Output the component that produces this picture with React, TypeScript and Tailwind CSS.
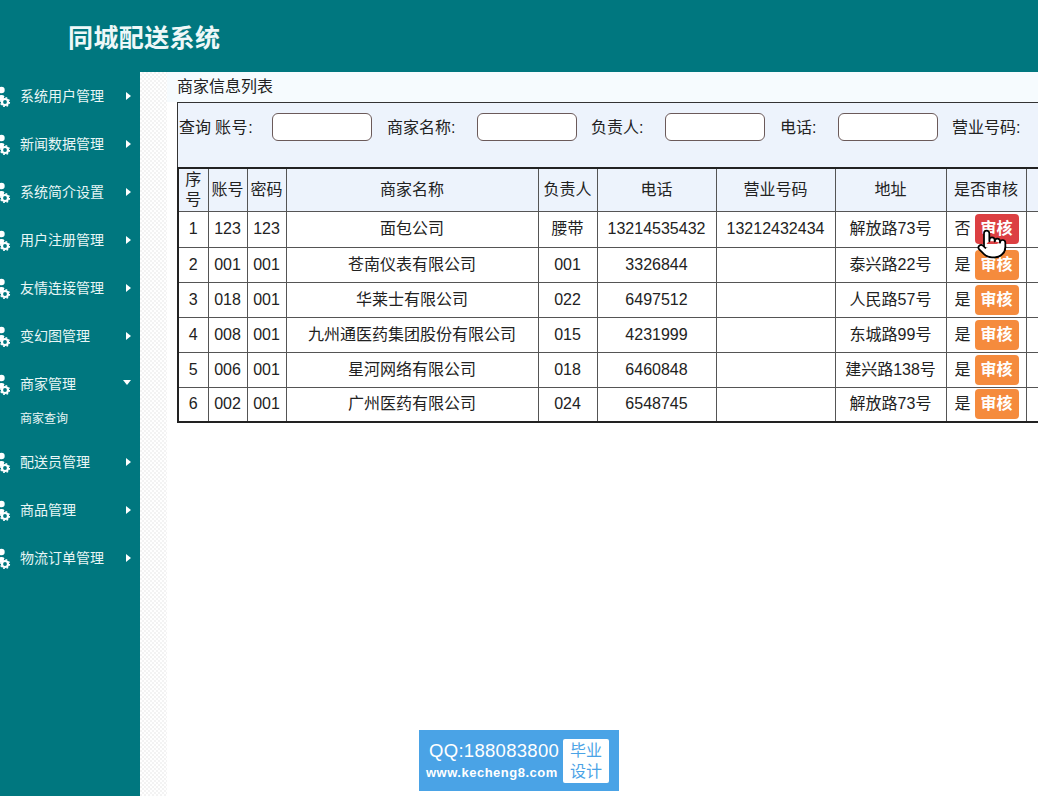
import { Pointer } from "lucide-react";

const menus = [
  "系统用户管理",
  "新闻数据管理",
  "系统简介设置",
  "用户注册管理",
  "友情连接管理",
  "变幻图管理",
  "商家管理",
  "配送员管理",
  "商品管理",
  "物流订单管理",
];

const rows = [
  { id: 1, account: "123", pwd: "123", name: "面包公司", owner: "腰带", tel: "13214535432", license: "13212432434", addr: "解放路73号", audit: "否" },
  { id: 2, account: "001", pwd: "001", name: "苍南仪表有限公司", owner: "001", tel: "3326844", license: "", addr: "泰兴路22号", audit: "是" },
  { id: 3, account: "018", pwd: "001", name: "华莱士有限公司", owner: "022", tel: "6497512", license: "", addr: "人民路57号", audit: "是" },
  { id: 4, account: "008", pwd: "001", name: "九州通医药集团股份有限公司", owner: "015", tel: "4231999", license: "", addr: "东城路99号", audit: "是" },
  { id: 5, account: "006", pwd: "001", name: "星河网络有限公司", owner: "018", tel: "6460848", license: "", addr: "建兴路138号", audit: "是" },
  { id: 6, account: "002", pwd: "001", name: "广州医药有限公司", owner: "024", tel: "6548745", license: "", addr: "解放路73号", audit: "是" },
];

const headers = ["序号", "账号", "密码", "商家名称", "负责人", "电话", "营业号码", "地址", "是否审核", ""];

function MenuIcon() {
  return (
    <svg width="12" height="24" viewBox="0 0 12 24" className="shrink-0">
      <circle cx="1.5" cy="5" r="3.2" fill="#fff" />
      <path d="M-3 15c0-3 2-5 4.5-5 1.300 0 2.300.4 3 1.200L2.500 15z" fill="#fff" />
      <circle cx="5" cy="17" r="3" fill="none" stroke="#fff" strokeWidth="2.200" />
      <circle cx="5" cy="17" r="4.400" fill="none" stroke="#fff" strokeWidth="1.400" strokeDasharray="1.700 1.750" />
    </svg>
  );
}

function SearchInput() {
  return <input className="h-[28px] w-[100px] shrink-0 rounded-[6px] border border-[#6b5a5a] bg-white" />;
}

export default function App() {
  return (
    <div className="relative h-[796px] w-[1038px] overflow-hidden bg-white font-['Liberation_Sans','Noto_Sans_CJK_SC',sans-serif] text-[16px] text-[#222]">
      <div className="flex h-[72px] items-center bg-[#00777f] pt-[5px] pl-[68px]">
        <h1 className="text-[25px] font-bold tracking-[0.4px] text-[#eef8f8]">同城配送系统</h1>
      </div>

      <div className="flex h-[724px]">
        <div className="w-[140px] shrink-0 bg-[#00777f] text-[14px] text-[#e8f6f6]">
          {menus.map((m) => (
            <div key={m}>
              <div className="flex h-[48px] items-center pt-[1px]">
                <MenuIcon />
                <span className="ml-[8px] flex-1">{m}</span>
                {m === "商家管理" ? (
                  <span className="mr-[9px] mb-[4px] h-0 w-0 border-x-[4px] border-t-[5px] border-x-transparent border-t-white" />
                ) : (
                  <span className="mr-[9px] mb-[2px] h-0 w-0 border-y-[4px] border-l-[5px] border-y-transparent border-l-white" />
                )}
              </div>
              {m === "商家管理" && <div className="flex h-[30px] items-center pb-[9px] pl-[20px] text-[12px]">商家查询</div>}
            </div>
          ))}
        </div>

        <div className="w-[27px] shrink-0 bg-[conic-gradient(#f3f3f3_25%,#ffffff_0_50%,#f3f3f3_0_75%,#ffffff_0)] bg-[length:4px_4px]" />

        <div className="min-w-0 flex-1 overflow-hidden">
          <div className="flex h-[30px] items-center bg-[#f6fbfe] pl-[10px]">商家信息列表</div>

          <div className="ml-[10px] w-[900px]">
            <div className="flex h-[65px] w-[900px] items-start border-t border-l border-[#333] bg-[#edf3fc] pt-[10px] pl-[1px]">
              <span className="mt-[3px] shrink-0">查询</span>
              <span className="mt-[3px] ml-[4px] w-[57px] shrink-0 tracking-[0.6px]">账号:</span>
              <SearchInput />
              <span className="mt-[3px] ml-[15px] w-[90px] shrink-0">商家名称:</span>
              <SearchInput />
              <span className="mt-[3px] ml-[14px] w-[74px] shrink-0">负责人:</span>
              <SearchInput />
              <span className="mt-[3px] ml-[15px] w-[58px] shrink-0">电话:</span>
              <SearchInput />
              <span className="mt-[3px] ml-[14px] shrink-0">营业号码:</span>
            </div>

            <table className="w-[900px] table-fixed border-collapse border-t-2 border-b-2 border-l-2 border-[#222]">
              <colgroup>
                <col className="w-[30px]" />
                <col className="w-[39px]" />
                <col className="w-[39px]" />
                <col className="w-[252px]" />
                <col className="w-[59px]" />
                <col className="w-[119px]" />
                <col className="w-[119px]" />
                <col className="w-[111px]" />
                <col className="w-[80px]" />
                <col />
              </colgroup>
              <thead>
                <tr className="h-[43px] bg-[#edf3fc]">
                  {headers.map((h, i) => (
                    <th key={i} className="border border-[#555] px-0 text-center text-[16px] leading-[20px] font-normal">
                      {h === "序号" ? <span className="mx-auto block w-[16px]">序号</span> : h}
                    </th>
                  ))}
                </tr>
              </thead>
              <tbody>
                {rows.map((r) => (
                  <tr key={r.id} className={`text-center ${r.id === 1 ? "h-[36px]" : "h-[35px]"}`}>
                    <td className="border border-[#555] p-0">{r.id}</td>
                    <td className="border border-[#555] p-0">{r.account}</td>
                    <td className="border border-[#555] p-0">{r.pwd}</td>
                    <td className="border border-[#555] p-0">{r.name}</td>
                    <td className="border border-[#555] p-0">{r.owner}</td>
                    <td className="border border-[#555] p-0">{r.tel}</td>
                    <td className="border border-[#555] p-0">{r.license}</td>
                    <td className="border border-[#555] p-0">{r.addr}</td>
                    <td className="border border-[#555] p-0">
                      <div className="flex items-center pl-[8px]">
                        <span className="mr-[4px]">{r.audit}</span>
                        <button className={`flex h-[30px] w-[44px] items-center justify-center rounded-[4px] text-[16px] font-bold text-white ${r.id === 1 ? "bg-[#dc3f42]" : "bg-[#f58b3d]"}`}>
                          审核
                        </button>
                      </div>
                    </td>
                    <td className="border border-[#555] p-0" />
                  </tr>
                ))}
              </tbody>
            </table>
          </div>
        </div>
      </div>

      <Pointer className="absolute top-[227px] left-[976px] h-[34px] w-[32px] fill-white stroke-black" strokeWidth={1.300} />

      <div className="absolute top-[730px] left-[419px] flex h-[61px] w-[200px] items-center bg-[#4aa3e6] pl-[7px] text-white">
        <div className="w-[137px] shrink-0">
          <div className="pl-[3px] text-[18.500px] leading-[24px] tracking-[0.3px]">QQ:188083800</div>
          <div className="mt-[1px] text-[13px] leading-[18px] font-bold tracking-[0.5px]">www.kecheng8.com</div>
        </div>
        <div className="flex h-[44px] w-[46px] items-center justify-center rounded-[2px] bg-white text-center text-[16px] leading-[21px] text-[#4aa3e6]">
          毕业
          <br />
          设计
        </div>
      </div>
    </div>
  );
}
